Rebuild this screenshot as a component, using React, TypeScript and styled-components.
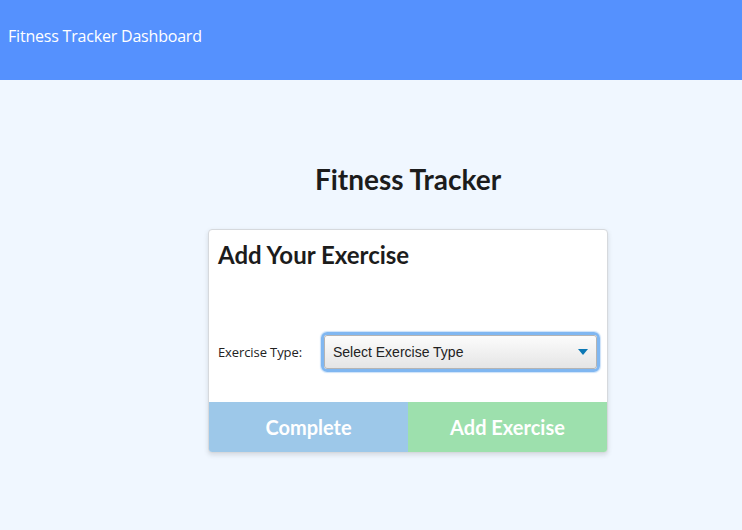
import React from "react";
import styled, { createGlobalStyle } from "styled-components";

const GlobalStyle = createGlobalStyle`
  html, body { margin: 0; padding: 0; }
  body {
    background: #f0f7ff;
    font-family: "Lato", "Open Sans", sans-serif;
    color: #222;
    min-height: 530px;
  }
  * { box-sizing: border-box; }
`;

const NavBar = styled.header`
  height: 80px;
  background: #5591fe;
  display: flex;
  align-items: center;
  padding: 0 8px 8px;
`;

const Brand = styled.span`
  color: #fff;
  font-family: "Open Sans", "Noto Sans", sans-serif;
  font-size: 16px;
  letter-spacing: -0.2px;
`;

const Main = styled.main`
  display: flex;
  flex-direction: column;
  align-items: center;
  padding: 80px 0 0 74px;
`;

const Title = styled.h1`
  margin: 0 0 31px;
  font-family: "Lato", sans-serif;
  font-weight: 700;
  font-size: 28px;
  line-height: 38px;
  color: #1c1c1c;
`;

const Card = styled.section`
  width: 400px;
  background: #fff;
  border: 1px solid #d6d9dd;
  border-radius: 4px;
  box-shadow: 0 2px 5px rgba(0, 0, 0, 0.12);
  display: flex;
  flex-direction: column;
  overflow: hidden;
`;

const CardBody = styled.div`
  padding: 10px 7px 30px 9px;
`;

const CardTitle = styled.h2`
  margin: 0 0 62px;
  font-family: "Lato", sans-serif;
  font-weight: 700;
  font-size: 24px;
  line-height: 30px;
  color: #1c1c1c;
`;

const Field = styled.div`
  display: flex;
  align-items: center;
  gap: 19px;
`;

const Label = styled.label`
  font-family: "Open Sans", "Noto Sans", sans-serif;
  font-size: 13px;
  color: #222;
  letter-spacing: -0.1px;
  white-space: nowrap;
`;

const SelectBox = styled.div`
  flex: 1;
  height: 40px;
  border-radius: 6px;
  border: 3px solid #80b7f1;
  box-shadow: 0 0 1px 1px rgba(128, 183, 241, 0.4);
`;

const Select = styled.div`
  height: 100%;
  border-radius: 3px;
  border: 1px solid #b4b4b4;
  background: linear-gradient(#fcfcfc, #e5e5e5);
  display: flex;
  align-items: center;
  justify-content: space-between;
  padding: 0 8px 0 8px;
  font-family: "Liberation Sans", Arial, sans-serif;
  font-size: 14px;
  color: #222;
`;

const Arrow = styled.svg`
  width: 10px;
  height: 6px;
`;

const ButtonRow = styled.div`
  display: grid;
  grid-template-columns: 1fr 1fr;
`;

const ActionButton = styled.button<{ $bg: string }>`
  height: 50px;
  border: none;
  margin: 0;
  background: ${(p) => p.$bg};
  color: #fff;
  font-family: "Lato", sans-serif;
  font-weight: 700;
  font-size: 20px;
  cursor: pointer;
`;

export default function App() {
  return (
    <>
      <GlobalStyle />
      <NavBar>
        <Brand>Fitness Tracker Dashboard</Brand>
      </NavBar>
      <Main>
        <Title>Fitness Tracker</Title>
        <Card>
          <CardBody>
            <CardTitle>Add Your Exercise</CardTitle>
            <Field>
              <Label>Exercise Type:</Label>
              <SelectBox>
                <Select>
                  <span>Select Exercise Type</span>
                  <Arrow viewBox="0 0 10 6">
                    <path d="M0 0 H10 L5 6 Z" fill="#0b78b5" />
                  </Arrow>
                </Select>
              </SelectBox>
            </Field>
          </CardBody>
          <ButtonRow>
            <ActionButton $bg="#9dc8e9">Complete</ActionButton>
            <ActionButton $bg="#9de0ad">Add Exercise</ActionButton>
          </ButtonRow>
        </Card>
      </Main>
    </>
  );
}
